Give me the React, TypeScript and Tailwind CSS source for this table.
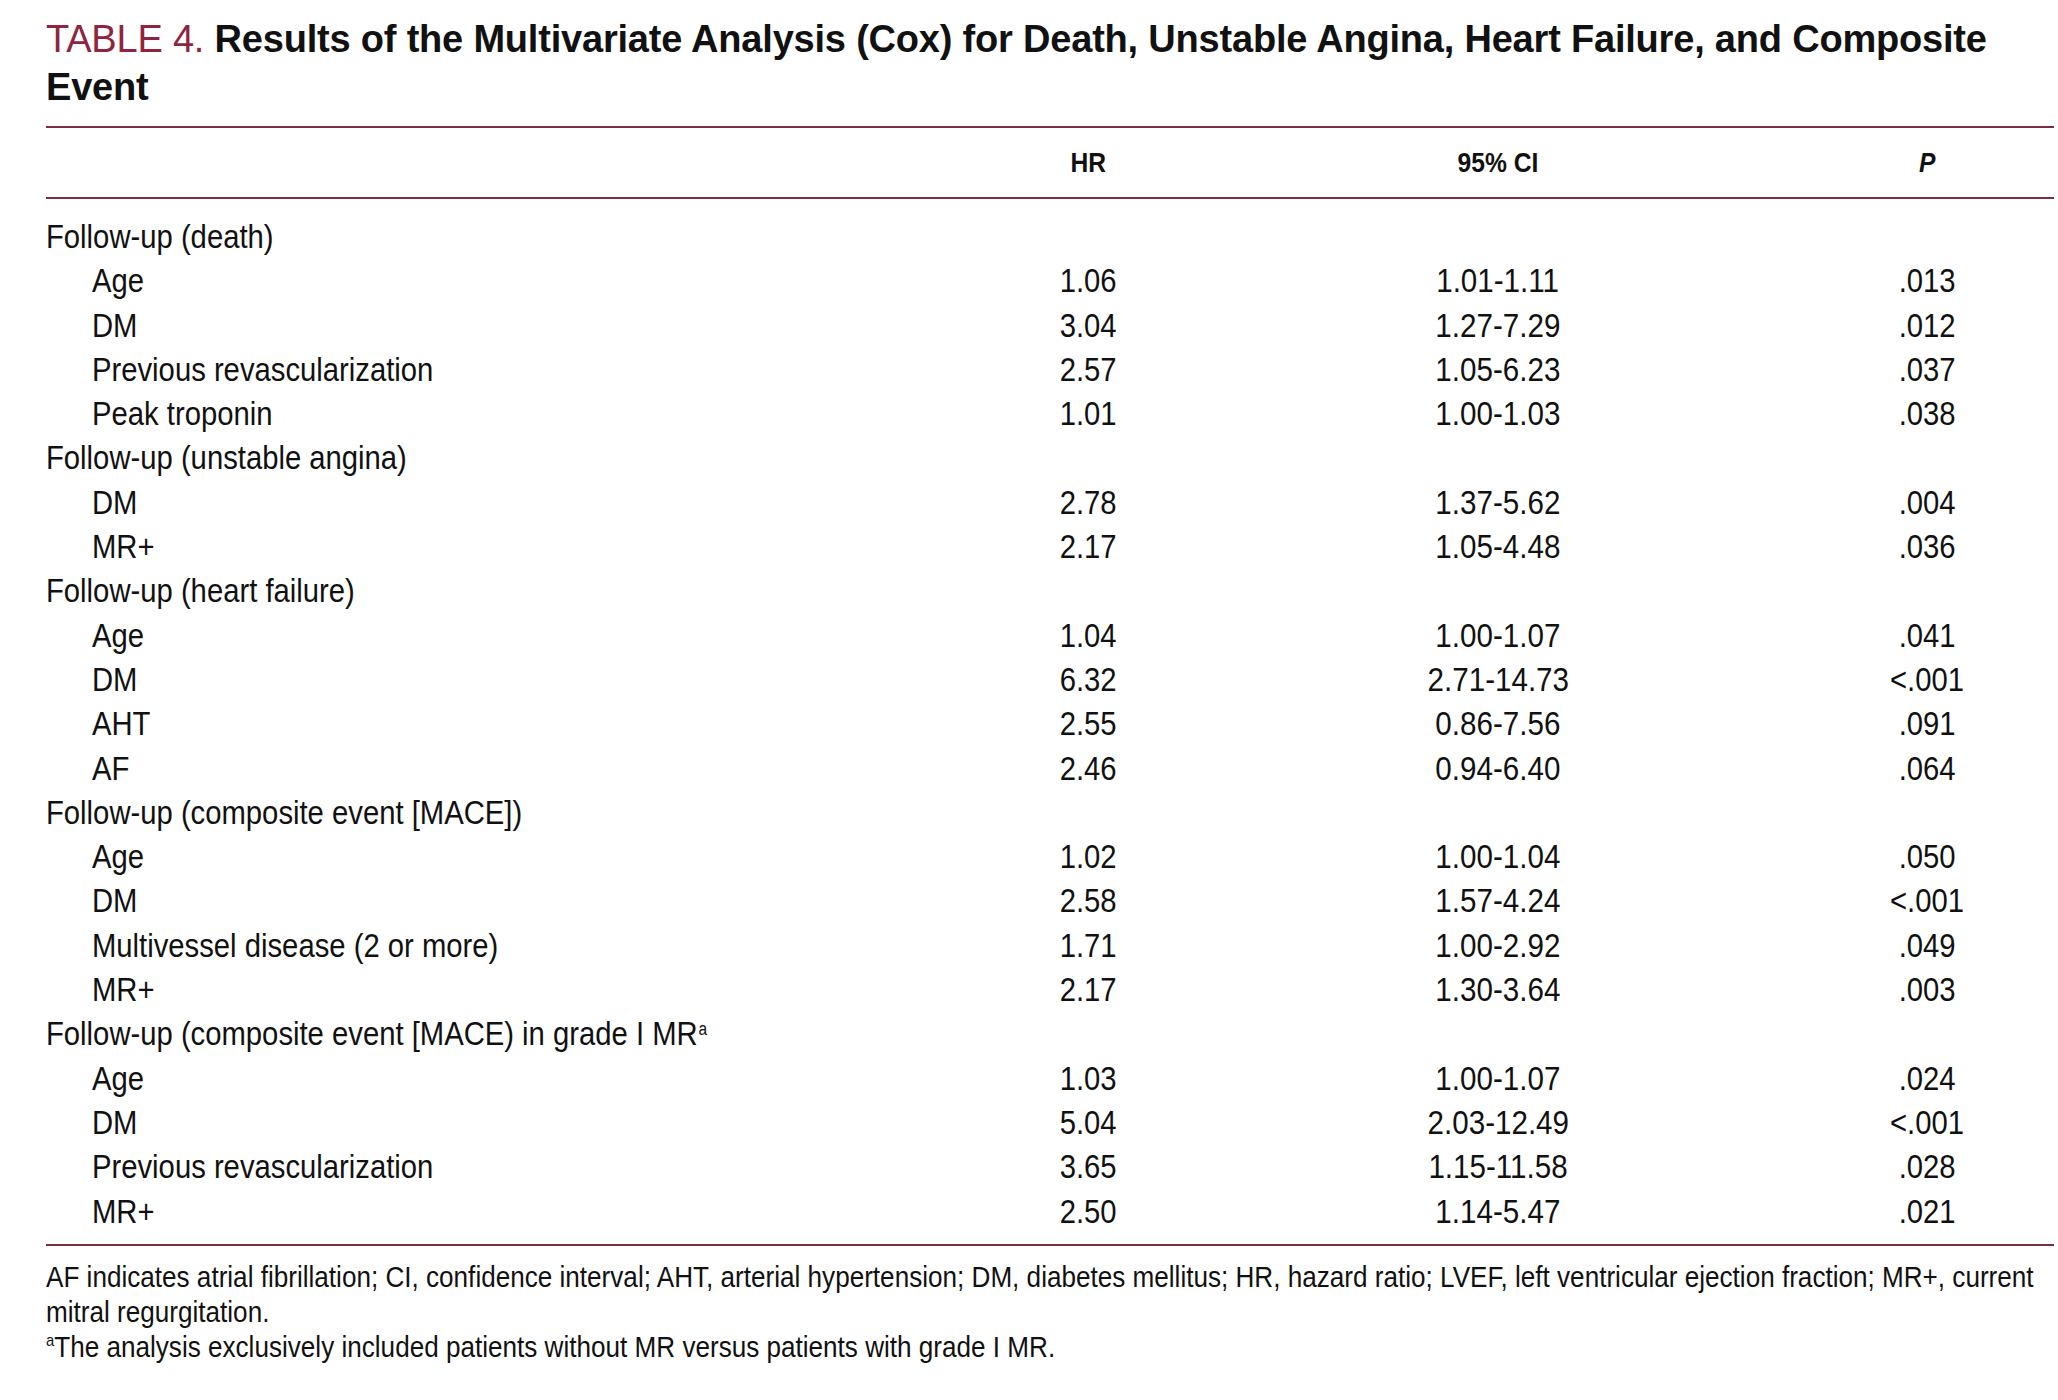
import React from "react";

type Row = { g?: string; sup?: string; l?: string; hr?: string; ci?: string; p?: string };

const rows: Row[] = [
  { g: "Follow-up (death)" },
  { l: "Age", hr: "1.06", ci: "1.01-1.11", p: ".013" },
  { l: "DM", hr: "3.04", ci: "1.27-7.29", p: ".012" },
  { l: "Previous revascularization", hr: "2.57", ci: "1.05-6.23", p: ".037" },
  { l: "Peak troponin", hr: "1.01", ci: "1.00-1.03", p: ".038" },
  { g: "Follow-up (unstable angina)" },
  { l: "DM", hr: "2.78", ci: "1.37-5.62", p: ".004" },
  { l: "MR+", hr: "2.17", ci: "1.05-4.48", p: ".036" },
  { g: "Follow-up (heart failure)" },
  { l: "Age", hr: "1.04", ci: "1.00-1.07", p: ".041" },
  { l: "DM", hr: "6.32", ci: "2.71-14.73", p: "<.001" },
  { l: "AHT", hr: "2.55", ci: "0.86-7.56", p: ".091" },
  { l: "AF", hr: "2.46", ci: "0.94-6.40", p: ".064" },
  { g: "Follow-up (composite event [MACE])" },
  { l: "Age", hr: "1.02", ci: "1.00-1.04", p: ".050" },
  { l: "DM", hr: "2.58", ci: "1.57-4.24", p: "<.001" },
  { l: "Multivessel disease (2 or more)", hr: "1.71", ci: "1.00-2.92", p: ".049" },
  { l: "MR+", hr: "2.17", ci: "1.30-3.64", p: ".003" },
  { g: "Follow-up (composite event [MACE) in grade I MR", sup: "a" },
  { l: "Age", hr: "1.03", ci: "1.00-1.07", p: ".024" },
  { l: "DM", hr: "5.04", ci: "2.03-12.49", p: "<.001" },
  { l: "Previous revascularization", hr: "3.65", ci: "1.15-11.58", p: ".028" },
  { l: "MR+", hr: "2.50", ci: "1.14-5.47", p: ".021" },
];

export default function App() {
  return (
    <div className="w-[2058px] min-h-[1400px] overflow-hidden bg-white pl-[46px] pr-[4px] pt-[15px] text-[#111] font-['Liberation_Sans',Arial,sans-serif]">
      <h1 className="text-[38px] leading-[48px] font-bold tracking-[-0.2px]">
        <span className="font-normal text-[#8f2440]">TABLE 4.</span> Results of the Multivariate Analysis (Cox) for
        Death, Unstable Angina, Heart Failure, and Composite
        <br />
        Event
      </h1>
      <div className="mt-[15px] border-t-2 border-[#76303f]" />
      <div className="grid h-[69px] grid-cols-[870px_344px_476px_1fr] items-center text-[28px] leading-[34px] font-bold">
        <div />
        <div className="text-center">
          <span className="inline-block scale-x-[0.88]">HR</span>
        </div>
        <div className="text-center">
          <span className="inline-block scale-x-[0.88]">95% CI</span>
        </div>
        <div className="pl-[64px] text-center italic">
          <span className="inline-block scale-x-[0.88]">P</span>
        </div>
      </div>
      <div className="border-t-2 border-[#76303f]" />
      <div className="pt-[15px] pb-[11px] text-[34px] leading-[44.3px]">
        {rows.map((r, i) =>
          r.g ? (
            <div key={i} className="h-[44.3px] whitespace-nowrap">
              <span className="inline-block origin-left scale-x-[0.86]">
                {r.g}
                {r.sup && <sup className="ml-[1px] text-[18px] -top-[10px]">{r.sup}</sup>}
              </span>
            </div>
          ) : (
            <div key={i} className="grid h-[44.3px] grid-cols-[870px_344px_476px_1fr] whitespace-nowrap">
              <div className="pl-[46px]">
                <span className="inline-block origin-left scale-x-[0.86]">{r.l}</span>
              </div>
              <div className="text-center">
                <span className="inline-block scale-x-[0.86]">{r.hr}</span>
              </div>
              <div className="text-center">
                <span className="inline-block scale-x-[0.87]">{r.ci}</span>
              </div>
              <div className="pl-[64px] text-center">
                <span className="inline-block scale-x-[0.86]">{r.p}</span>
              </div>
            </div>
          )
        )}
      </div>
      <div className="border-t-2 border-[#76303f]" />
      <div className="overflow-hidden pt-[13px] text-[30px] leading-[35px] whitespace-nowrap">
        <p>
          <span className="inline-block origin-left scale-x-[0.87]">
            AF indicates atrial fibrillation; CI, confidence interval; AHT, arterial hypertension; DM, diabetes mellitus;
            HR, hazard ratio; LVEF, left ventricular ejection fraction; MR+, current
          </span>
        </p>
        <p>
          <span className="inline-block origin-left scale-x-[0.87]">mitral regurgitation.</span>
        </p>
        <p>
          <span className="inline-block origin-left scale-x-[0.87]">
            <sup className="text-[17px] -top-[11px]">a</sup>The analysis exclusively included patients without MR versus
            patients with grade I MR.
          </span>
        </p>
      </div>
    </div>
  );
}
